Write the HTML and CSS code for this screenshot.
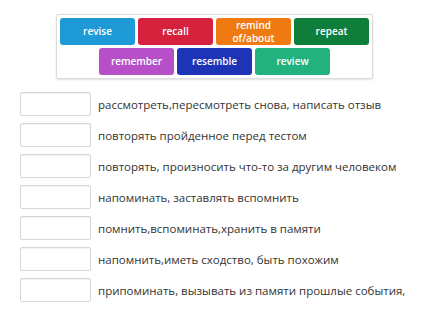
FILE: index.html
```html
<!DOCTYPE html>
<html lang="en">
<head>
    <meta charset="UTF-8">
    <meta name="viewport" content="width=device-width, initial-scale=1.0">
    <title>Match up</title>
    <link rel="stylesheet" href="styles.css">
</head>
<body>

    <div class="tiles">
        <div class="tile blue">revise</div>
        <div class="tile red">recall</div>
        <div class="tile orange">remind<br>of/about</div>
        <div class="tile green">repeat</div>
        <div class="tile purple">remember</div>
        <div class="tile navy">resemble</div>
        <div class="tile teal">review</div>
    </div>

    <div class="rows">
        <div class="row"><div class="slot"></div><span>рассмотреть,пересмотреть снова, написать отзыв</span></div>
        <div class="row"><div class="slot"></div><span>повторять пройденное перед тестом</span></div>
        <div class="row"><div class="slot"></div><span>повторять, произносить что-то за другим человеком</span></div>
        <div class="row"><div class="slot"></div><span>напоминать, заставлять вспомнить</span></div>
        <div class="row"><div class="slot"></div><span>помнить,вспоминать,хранить в памяти</span></div>
        <div class="row"><div class="slot"></div><span>напомнить,иметь сходство, быть похожим</span></div>
        <div class="row"><div class="slot"></div><span>припоминать, вызывать из памяти прошлые события,</span></div>
    </div>

</body>
</html>
```

FILE: styles.css
```css
body {
    margin: 0;
    padding: 0;
    background: #fff;
    font-family: 'Open Sans', sans-serif;
    overflow: hidden;
}

.tiles {
    display: flex;
    flex-wrap: wrap;
    justify-content: center;
    gap: 3px;
    width: 309px;
    padding: 3px;
    margin: 14px 0 0 56px;
    border: 1px solid #dcdcdc;
    border-radius: 2px;
    box-shadow: 0 1px 2px rgba(0, 0, 0, 0.12);
}

.tile {
    width: 75px;
    height: 27px;
    border-radius: 3px;
    color: #fff;
    font-size: 10px;
    font-weight: 600;
    line-height: 13px;
    text-align: center;
    display: flex;
    align-items: center;
    justify-content: center;
}

.blue { background: #1e9bd7; }
.red { background: #d5213b; }
.orange { background: #f07a12; }
.green { background: #0f7e3a; }
.purple { background: #b64fc8; }
.navy { background: #1c34b5; }
.teal { background: #21b27d; }

.rows {
    display: flex;
    flex-direction: column;
    gap: 7px;
    margin: 13px 0 0 20px;
}

.row {
    display: flex;
    align-items: center;
    gap: 7px;
}

.slot {
    width: 69px;
    height: 22px;
    border: 1px solid #d6d6d6;
    border-radius: 2px;
    box-shadow: inset 0 1px 1px rgba(0, 0, 0, 0.06);
}

.row span {
    font-size: 11.5px;
    color: #333;
    white-space: nowrap;
}
```
